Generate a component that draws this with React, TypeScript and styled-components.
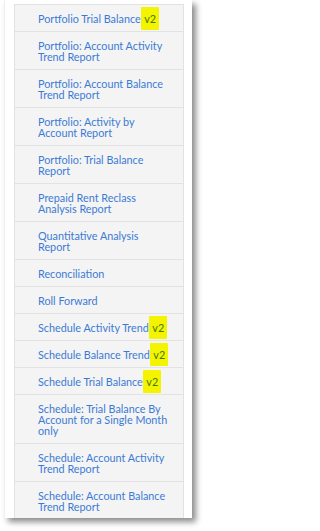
import * as React from "react";
import styled, { createGlobalStyle } from "styled-components";

const GlobalStyle = createGlobalStyle`
  html, body {
    margin: 0;
    padding: 0;
    background: #ffffff;
  }
  body {
    font-family: Lato, "Open Sans", sans-serif;
  }
`;

const Page = styled.div`
  padding: 0 0 0 4px;
  width: 206px;
  height: 531px;
  box-sizing: border-box;
`;

const Card = styled.div`
  width: 188px;
  height: 518px;
  box-sizing: border-box;
  padding: 4px 9px 0 9px;
  background: #ffffff;
  overflow: hidden;
  box-shadow: 4px 4px 6px rgba(0, 0, 0, 0.45);
  border-left: 1px solid #f0f0f0;
`;

const ReportList = styled.ul`
  list-style: none;
  margin: 0;
  padding: 0;
  width: 170px;
  background: #f4f4f4;
  border: 1px solid #e2e2e2;
  border-bottom: none;
  box-sizing: border-box;
`;

const ReportItem = styled.li<{ $first?: boolean; $tagged?: boolean }>`
  border-top: ${(p) => (p.$first ? "none" : "1px solid #e2e2e2")};
  padding: 7.5px 15px 7.5px 23px;
  font-size: 10.8px;
  line-height: 11px;
  color: #3b7bd4;
  white-space: ${(p) => (p.$tagged ? "nowrap" : "normal")};
`;

const Highlight = styled.span`
  background: #f4f400;
  color: #3f7a10;
  padding: 5px 3px 5px 1px;
  border-radius: 1px;
`;

type Report = { name: string; v2?: boolean };

const reports: Report[] = [
  { name: "Portfolio Trial Balance", v2: true },
  { name: "Portfolio: Account Activity Trend Report" },
  { name: "Portfolio: Account Balance Trend Report" },
  { name: "Portfolio: Activity by Account Report" },
  { name: "Portfolio: Trial Balance Report" },
  { name: "Prepaid Rent Reclass Analysis Report" },
  { name: "Quantitative Analysis Report" },
  { name: "Reconciliation" },
  { name: "Roll Forward" },
  { name: "Schedule Activity Trend", v2: true },
  { name: "Schedule Balance Trend", v2: true },
  { name: "Schedule Trial Balance", v2: true },
  { name: "Schedule: Trial Balance By Account for a Single Month only" },
  { name: "Schedule: Account Activity Trend Report" },
  { name: "Schedule: Account Balance Trend Report" },
];

const App: React.FC = () => {
  return (
    <>
      <GlobalStyle />
      <Page>
        <Card>
          <ReportList>
            {reports.map((r, i) => (
              <ReportItem key={r.name} $first={i === 0} $tagged={r.v2}>
                {r.name}
                {r.v2 && <Highlight> v2</Highlight>}
              </ReportItem>
            ))}
          </ReportList>
        </Card>
      </Page>
    </>
  );
};

export default App;
